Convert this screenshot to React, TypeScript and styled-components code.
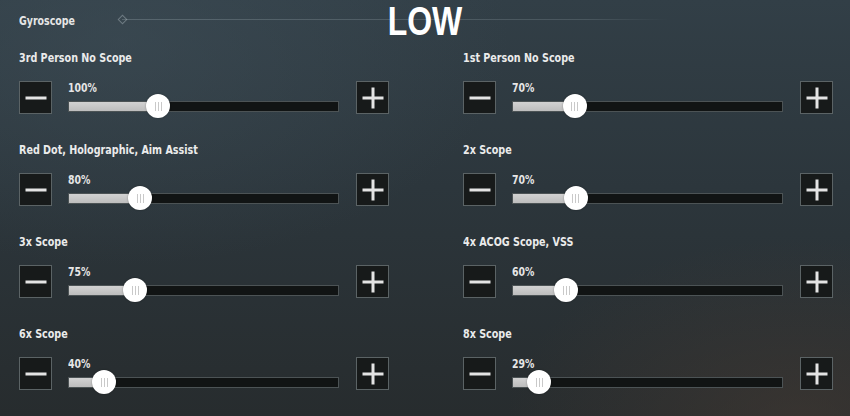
import styled, { createGlobalStyle } from 'styled-components';

const GlobalStyle = createGlobalStyle`
  html, body {
    margin: 0;
    padding: 0;
    background: #2a3236;
  }
  * {
    box-sizing: border-box;
  }
`;

const CONDENSED = `"Liberation Sans Narrow", "DejaVu Sans Condensed", "DejaVu Sans", sans-serif`;

interface Setting {
  label: string;
  value: string;
  pos: number; // knob position along the track, 0..1
}

const leftSettings: Setting[] = [
  { label: '3rd Person No Scope', value: '100%', pos: 0.333 },
  { label: 'Red Dot, Holographic, Aim Assist', value: '80%', pos: 0.267 },
  { label: '3x Scope', value: '75%', pos: 0.248 },
  { label: '6x Scope', value: '40%', pos: 0.133 },
];

const rightSettings: Setting[] = [
  { label: '1st Person No Scope', value: '70%', pos: 0.232 },
  { label: '2x Scope', value: '70%', pos: 0.236 },
  { label: '4x ACOG Scope, VSS', value: '60%', pos: 0.2 },
  { label: '8x Scope', value: '29%', pos: 0.1 },
];

const Screen = styled.div`
  position: relative;
  width: 850px;
  height: 416px;
  overflow: hidden;
  font-family: ${CONDENSED};
  font-stretch: condensed;
  color: #ebebeb;
  background:
    radial-gradient(ellipse 420px 260px at 800px 420px, rgba(70, 58, 50, 0.55), transparent 70%),
    radial-gradient(ellipse 520px 300px at 120px 40px, rgba(64, 80, 90, 0.5), transparent 75%),
    linear-gradient(180deg, #323f47 0%, #2c363c 45%, #272c2e 100%);
`;

const Header = styled.div`
  display: flex;
  align-items: center;
  height: 40px;
  padding-left: 19px;
`;

const SectionTitle = styled.span`
  display: inline-block;
  font-size: 12.5px;
  font-weight: bold;
  width: 103px;
  color: #e6e6e6;
  transform: scaleX(0.84);
  transform-origin: left center;
`;

const Divider = styled.div`
  position: relative;
  width: 546px;
  height: 1px;
  margin-top: -1px;
  background: linear-gradient(90deg, rgba(200, 215, 220, 0.22), rgba(200, 215, 220, 0.16) 85%, rgba(200, 215, 220, 0));

  &::before {
    content: '';
    position: absolute;
    left: -3px;
    top: -3px;
    width: 5px;
    height: 5px;
    border: 1px solid rgba(210, 220, 225, 0.35);
    transform: rotate(45deg);
  }
`;

const Caption = styled.div`
  position: absolute;
  top: 1px;
  left: 0;
  right: 0;
  text-align: center;
  font-family: "Liberation Sans", "DejaVu Sans", sans-serif;
  font-weight: bold;
  font-size: 40px;
  line-height: 40px;
  color: #ffffff;
  transform: scaleX(0.8);
  pointer-events: none;
`;

const Columns = styled.div`
  display: grid;
  grid-template-columns: 370px 370px;
  column-gap: 74px;
  padding-left: 19px;
`;

const Column = styled.div`
  display: flex;
  flex-direction: column;
`;

const Row = styled.div`
  display: flex;
  flex-direction: column;
  height: 92px;
  padding-top: 10px;
`;

const Label = styled.div`
  font-size: 13px;
  font-weight: bold;
  line-height: 16px;
  height: 16px;
  white-space: nowrap;
  transform: scaleX(0.82);
  transform-origin: left center;
`;

const Controls = styled.div`
  display: flex;
  align-items: flex-start;
  margin-top: 15px;
`;

const StepButton = styled.div<{ $plus?: boolean }>`
  position: relative;
  flex: none;
  width: 33px;
  height: 33px;
  background: #171a1a;
  border: 1px solid #5b6365;

  &::before,
  &::after {
    content: '';
    position: absolute;
    left: 50%;
    top: 50%;
    background: #e4e4e4;
    transform: translate(-50%, -50%);
  }
  &::before {
    width: 21px;
    height: 3px;
  }
  &::after {
    width: 3px;
    height: 21px;
    display: ${(p) => (p.$plus ? 'block' : 'none')};
  }
`;

const SliderArea = styled.div`
  flex: 1;
  display: flex;
  flex-direction: column;
  margin: 0 17px 0 16px;
`;

const Percent = styled.div`
  font-size: 13px;
  font-weight: bold;
  line-height: 14px;
  height: 13px;
  color: #e6e6e6;
  transform: scaleX(0.8);
  transform-origin: left center;
`;

const TrackWrap = styled.div`
  position: relative;
  height: 24px;
  display: flex;
  align-items: center;
`;

const Track = styled.div`
  position: relative;
  width: 100%;
  height: 11px;
  background: #111414;
  border: 1px solid #4c5355;
`;

const Fill = styled.div`
  height: 100%;
  background: linear-gradient(180deg, #d2d2d2, #bdbdbd);
`;

const Knob = styled.div`
  position: absolute;
  top: 50%;
  width: 24px;
  height: 24px;
  border-radius: 50%;
  background: #ffffff;
  transform: translate(-50%, -50%);
  display: flex;
  align-items: center;
  justify-content: center;
  gap: 2px;
  box-shadow: 0 0 2px rgba(0, 0, 0, 0.35);
`;

const Grip = styled.span`
  width: 1px;
  height: 9px;
  background: #c9c9c9;
`;

function SliderRow({ setting }: { setting: Setting }) {
  const pct = `${setting.pos * 100}%`;
  return (
    <Row>
      <Label>{setting.label}</Label>
      <Controls>
        <StepButton />
        <SliderArea>
          <Percent>{setting.value}</Percent>
          <TrackWrap>
            <Track>
              <Fill style={{ width: pct }} />
            </Track>
            <Knob style={{ left: pct }}>
              <Grip />
              <Grip />
              <Grip />
            </Knob>
          </TrackWrap>
        </SliderArea>
        <StepButton $plus />
      </Controls>
    </Row>
  );
}

export default function App() {
  return (
    <>
      <GlobalStyle />
      <Screen>
        <Header>
          <SectionTitle>Gyroscope</SectionTitle>
          <Divider />
        </Header>
        <Caption>LOW</Caption>
        <Columns>
          <Column>
            {leftSettings.map((s) => (
              <SliderRow key={s.label} setting={s} />
            ))}
          </Column>
          <Column>
            {rightSettings.map((s) => (
              <SliderRow key={s.label} setting={s} />
            ))}
          </Column>
        </Columns>
      </Screen>
    </>
  );
}
